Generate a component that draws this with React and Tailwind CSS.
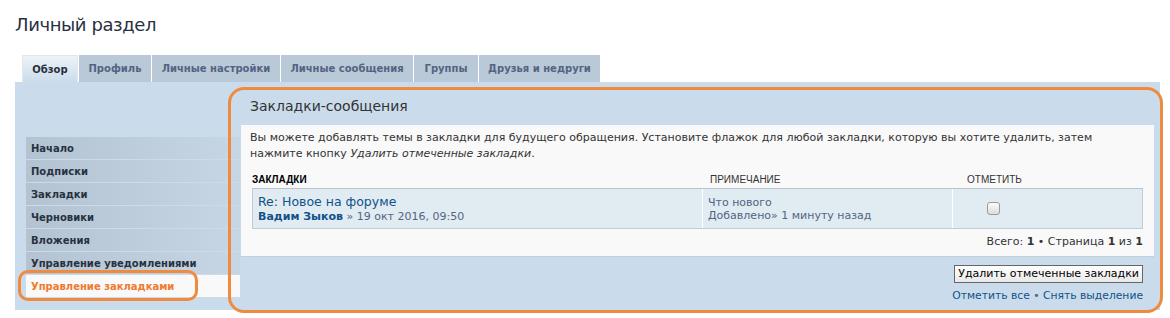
const tabs = [
  { label: "Обзор", w: "w-[56px]", active: true },
  { label: "Профиль", w: "w-[72px]" },
  { label: "Личные настройки", w: "w-[128px]" },
  { label: "Личные сообщения", w: "w-[132px]" },
  { label: "Группы", w: "w-[64px]" },
  { label: "Друзья и недруги", w: "w-[121px]" },
];

const menu = [
  "Начало",
  "Подписки",
  "Закладки",
  "Черновики",
  "Вложения",
  "Управление уведомлениями",
  "Управление закладками",
];

function Tabs() {
  return (
    <div className="flex gap-px pl-[7px] h-[27px]">
      {tabs.map((t) => (
        <div
          key={t.label}
          className={
            t.active
              ? `${t.w} flex items-center justify-center border border-b-0 border-[#dfe7ef] bg-gradient-to-b from-[#eef3f7] to-[#cadceb] text-[10px] font-bold text-[#28313f]`
              : `${t.w} flex items-center justify-center bg-[#b9c9d8] text-[10px] font-bold text-[#536482]`
          }
        >
          {t.label}
        </div>
      ))}
    </div>
  );
}

function SideMenu() {
  return (
    <div className="ml-[11px] mt-[55px] w-[214px] flex flex-col">
      {menu.map((m, i) =>
        i === menu.length - 1 ? (
          <div
            key={m}
            className="h-[22px] mb-px flex items-center pl-[5px] bg-[#f9f9f9] text-[10px] font-bold text-[#f07a2e]"
          >
            {m}
          </div>
        ) : (
          <div
            key={m}
            className="h-[22px] mb-px flex items-center pl-[5px] bg-gradient-to-r from-[#b3c3d2] to-[#c6d6e4] text-[10px] font-bold text-[#28313f]"
          >
            {m}
          </div>
        )
      )}
    </div>
  );
}

function BookmarkTable() {
  return (
    <div className="mx-[2px] mt-[8px]">
      <div className="flex h-[19px] items-center border-b border-[#b9c3cc] font-['Liberation_Sans',Arial,sans-serif] text-[10px] text-[#333]">
        <div className="w-[451px] font-bold text-black">ЗАКЛАДКИ</div>
        <div className="w-[250px] pl-[7px]">ПРИМЕЧАНИЕ</div>
        <div className="pl-[14px]">ОТМЕТИТЬ</div>
      </div>
      <div className="flex h-[40px] bg-[#e1ebf2] border-x border-b border-[#c3ccd4]">
        <div className="w-[450px] pl-[5px] flex flex-col justify-center border-r border-white">
          <span className="text-[12.5px] leading-[16px] text-[#105289]">Re: Новое на форуме</span>
          <span className="text-[11px] leading-[14px] text-[#536482]">
            <span className="font-bold text-[#105289]">Вадим Зыков</span> » 19 окт 2016, 09:50
          </span>
        </div>
        <div className="w-[250px] pl-[5px] pt-[1px] flex flex-col justify-center border-r border-white text-[11px] leading-[13px] text-[#536482]">
          <span>Что нового</span>
          <span>Добавлено» 1 минуту назад</span>
        </div>
        <div className="flex-1 flex items-center pl-[34px]">
          <div className="w-[13px] h-[13px] rounded-[3px] border border-[#9a9a9a] bg-gradient-to-b from-[#fcfcfc] to-[#dcdcdc]" />
        </div>
      </div>
      <div className="mt-[5px] text-right text-[11px] text-[#333]">
        Всего: <b>1</b> • Страница <b>1</b> из <b>1</b>
      </div>
    </div>
  );
}

function Content() {
  return (
    <div className="ml-px w-[913px] flex flex-col">
      <h2 className="mt-[14px] pl-[9px] h-[20px] text-[14px] leading-[20px] text-[#333]">
        Закладки-сообщения
      </h2>
      <div className="mt-[9px] h-[132px] bg-[#f9f9f9] px-[9px] pt-[5px] border-b border-[#c2d0dc]">
        <p className="text-[11px] leading-[16px] text-[#333]">
          Вы можете добавлять темы в закладки для будущего обращения. Установите флажок для любой закладки, которую вы хотите удалить, затем
          <br />
          нажмите кнопку <i>Удалить отмеченные закладки</i>.
        </p>
        <BookmarkTable />
      </div>
      <div className="mt-[8px] pr-[11px] flex flex-col items-end">
        <button className="h-[18px] px-[3px] border border-[#666] bg-gradient-to-b from-[#ffffff] to-[#e9e9e9] text-[11px] leading-[14px] text-black">
          Удалить отмеченные закладки
        </button>
        <div className="mt-[5px] text-[10.75px] text-[#105289]">
          Отметить все <span className="text-[#536482]">•</span> Снять выделение
        </div>
      </div>
    </div>
  );
}

export default function App() {
  return (
    <div className="relative w-[1170px] h-[318px] bg-white font-['DejaVu_Sans',Verdana,sans-serif]">
      <h1 className="pl-[15px] pt-[13px] text-[18px] leading-[24px] tracking-[-0.4px] font-normal text-[#28313f]">
        Личный раздел
      </h1>
      <div className="ml-[15px] mt-[18px] w-[1145px]">
        <Tabs />
        <div className="flex h-[228px] bg-[#cadceb]">
          <SideMenu />
          <Content />
        </div>
      </div>
      {/* orange annotations drawn over the page */}
      <div className="absolute left-[228px] top-[87px] w-[935px] h-[226px] rounded-[16px] border-[3px] border-[#ef8a3e] pointer-events-none" />
      <div className="absolute left-[18px] top-[270px] w-[180px] h-[31px] rounded-[10px] border-[3px] border-[#ef8a3e] pointer-events-none" />
    </div>
  );
}
